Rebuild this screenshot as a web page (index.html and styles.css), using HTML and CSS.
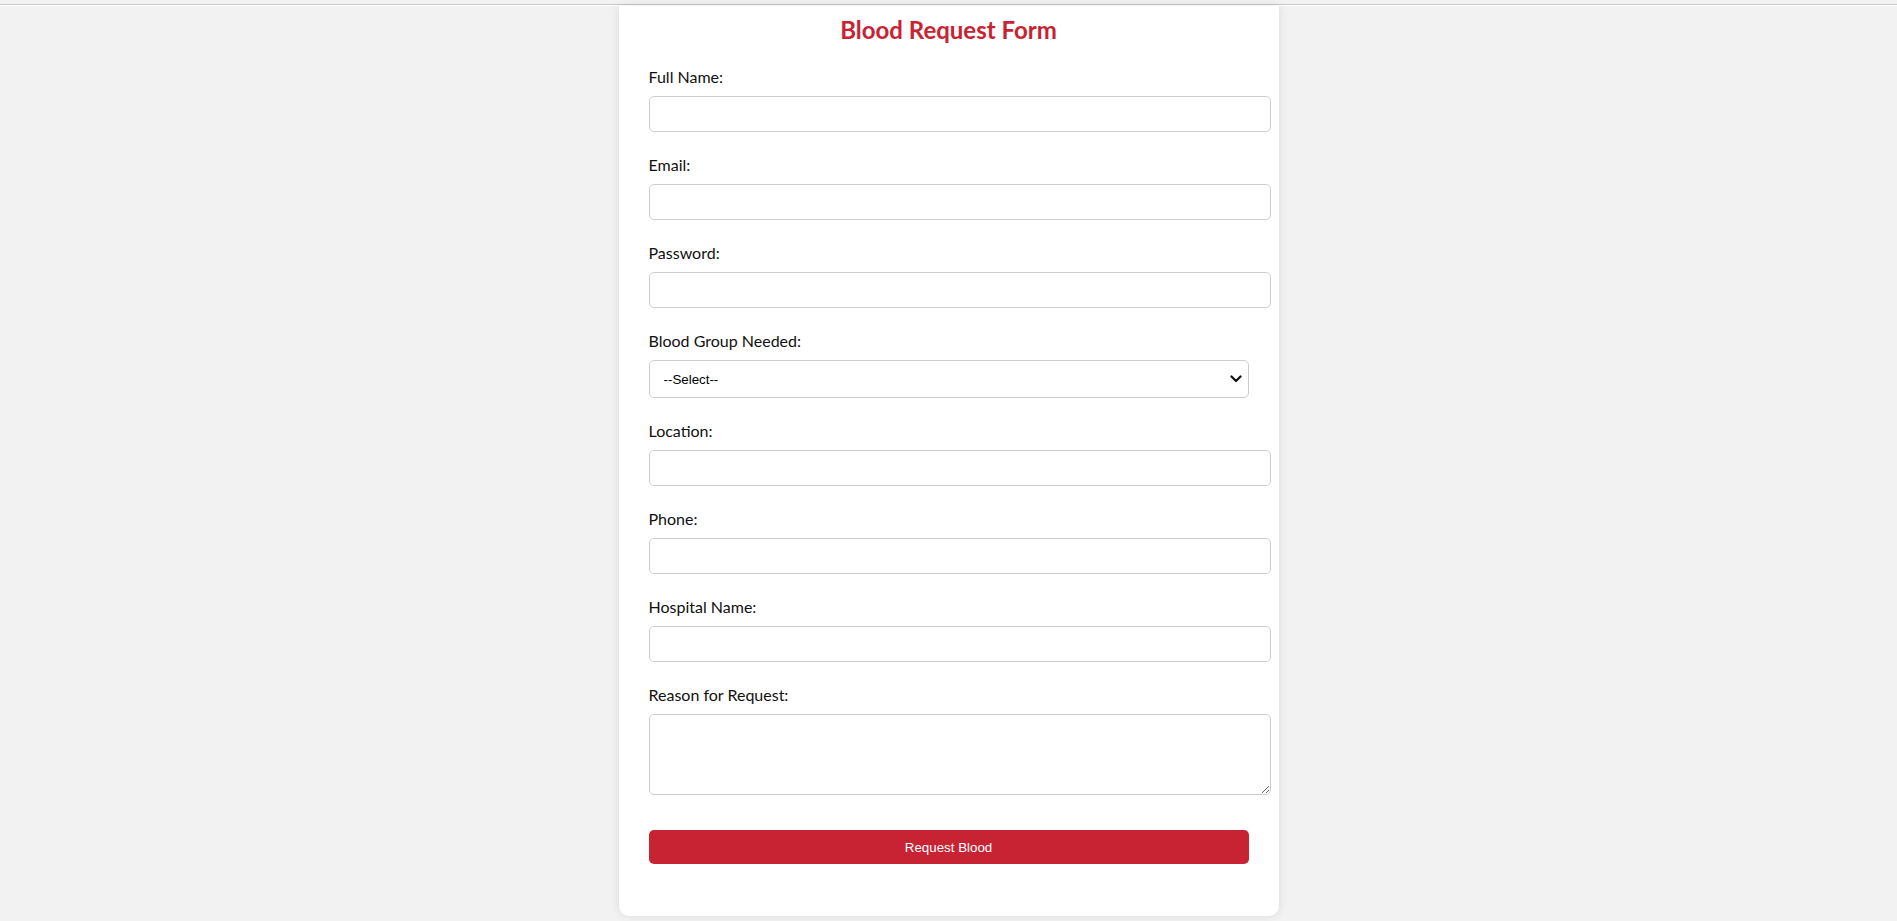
FILE: index.html
```html
<!DOCTYPE html>
<html lang="en">
<head>
<meta charset="utf-8">
<title>Blood Request Form</title>
<link rel="stylesheet" href="styles.css">
</head>
<body>
<div class="topline"></div>
<div class="card">
  <h2 class="title">Blood Request Form</h2>
  <form class="form">
    <label class="label" for="name">Full Name:</label>
    <input class="field" id="name" type="text">
    <label class="label" for="email">Email:</label>
    <input class="field" id="email" type="email">
    <label class="label" for="pw">Password:</label>
    <input class="field" id="pw" type="password">
    <label class="label" for="bg">Blood Group Needed:</label>
    <div class="select-wrap">
      <select class="select" id="bg">
        <option>--Select--</option>
        <option>A+</option>
        <option>A-</option>
        <option>B+</option>
        <option>B-</option>
        <option>AB+</option>
        <option>AB-</option>
        <option>O+</option>
        <option>O-</option>
      </select>
      <svg class="chevron" width="12" height="8" viewBox="0 0 12 8" aria-hidden="true">
        <path d="M1.5 1.5 L6 6 L10.5 1.5" fill="none" stroke="#111" stroke-width="2.2" stroke-linecap="round" stroke-linejoin="round"/>
      </svg>
    </div>
    <label class="label" for="loc">Location:</label>
    <input class="field" id="loc" type="text">
    <label class="label" for="phone">Phone:</label>
    <input class="field" id="phone" type="text">
    <label class="label" for="hosp">Hospital Name:</label>
    <input class="field" id="hosp" type="text">
    <label class="label" for="reason">Reason for Request:</label>
    <textarea class="field area" id="reason"></textarea>
    <button class="btn" type="button">Request Blood</button>
  </form>
</div>
</body>
</html>
```
FILE: styles.css
```css
html, body {
  margin: 0;
  padding: 0;
}
body {
  background: #f2f2f2;
  font-family: Lato, "Liberation Sans", sans-serif;
  min-height: 921px;
}
.topline {
  margin-top: 4px;
  height: 0;
  border-top: 1px solid #c8c8c8;
  border-bottom: 1px solid #ffffff;
}
.card {
  max-width: 600px;
  margin: 0 auto;
  padding: 10px 30px 52px;
  background: #ffffff;
  border-radius: 0 0 10px 10px;
  box-shadow: 0 0 10px rgba(0, 0, 0, 0.1);
}
.title {
  margin: 0 0 24px;
  text-align: center;
  color: #c82333;
  font-size: 24px;
  line-height: 28px;
  font-weight: 700;
}
.form {
  display: flex;
  flex-direction: column;
  align-items: flex-start;
}
.label {
  display: block;
  font-size: 16px;
  line-height: 17px;
  color: #111;
  margin-bottom: 11px;
}
.field {
  display: block;
  width: 100%;
  box-sizing: content-box;
  height: 14px;
  padding: 10px;
  margin: 0 0 24px;
  border: 1px solid #cccccc;
  border-radius: 5px;
  background: #fff;
  font-family: "Liberation Sans", Arial, sans-serif;
  font-size: 13.33px;
  outline: none;
}
.area {
  height: 59px;
  margin-bottom: 35px;
}
.select-wrap {
  position: relative;
  width: 100%;
  margin: 0 0 24px;
}
.select {
  display: block;
  width: 100%;
  box-sizing: border-box;
  height: 38px;
  padding: 0 30px 0 14px;
  margin: 0;
  border: 1px solid #cccccc;
  border-radius: 5px;
  background: #fff;
  color: #000;
  font-family: "Liberation Sans", Arial, sans-serif;
  font-size: 13.33px;
  -webkit-appearance: none;
  appearance: none;
}
.chevron {
  position: absolute;
  right: 7px;
  top: 15px;
  pointer-events: none;
}
.btn {
  display: block;
  width: 100%;
  height: 34px;
  border: none;
  border-radius: 5px;
  background: #c82333;
  color: #ffffff;
  font-family: "Liberation Sans", Arial, sans-serif;
  font-size: 13.33px;
  cursor: pointer;
}
```
